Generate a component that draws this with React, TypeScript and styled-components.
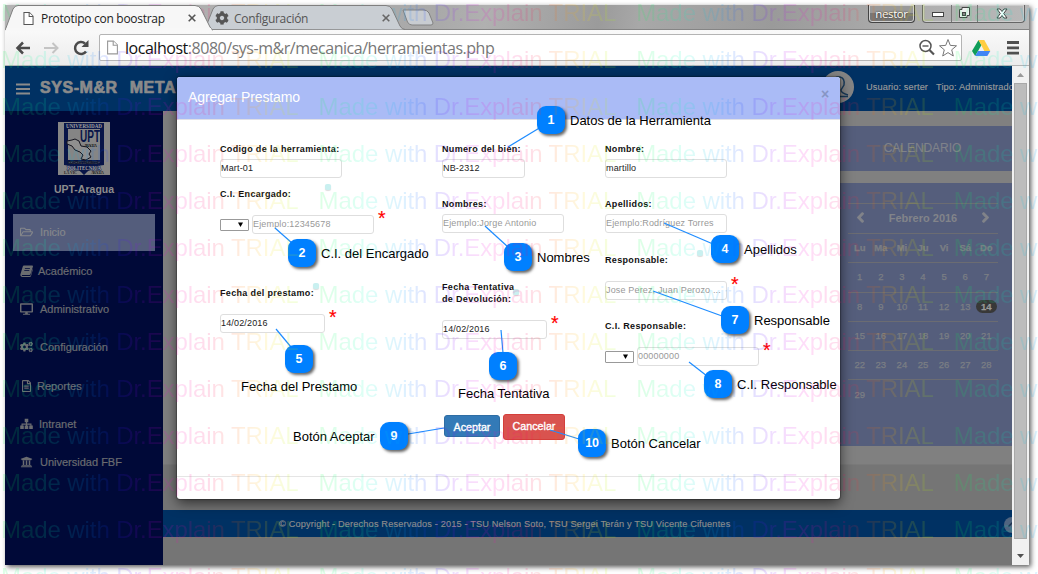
import React from 'react';
import styled, { createGlobalStyle } from 'styled-components';
import { FaRegFolderOpen, FaDesktop, FaCogs, FaRegFileAlt, FaUniversity, FaChevronLeft, FaChevronRight, FaCog } from 'react-icons/fa';

const Global = createGlobalStyle`
  * { box-sizing: border-box; }
  body { margin: 0; background: #fff; overflow: hidden; font-family: "Liberation Sans", Arial, sans-serif; }
`;

const Stage = styled.div`
  position: relative;
  width: 1038px;
  height: 574px;
  padding: 5px 9px 9px 5px;
  overflow: hidden;
`;

const BrowserWindow = styled.div`
  width: 1024px;
  height: 560px;
  display: flex;
  flex-direction: column;
  background: #fff;
  box-shadow: 2px 2px 5px rgba(0, 0, 0, 0.65);
`;

/* ---------- browser chrome ---------- */

const TabStrip = styled.div`
  height: 25px;
  display: flex;
  position: relative;
  background: linear-gradient(100deg, #b4b4b4 0%, #a9a9a9 42%, #b0b0b0 47%, #9b9b9b 58%, #a8a8a8 62%, #9a9a9a 75%, #adadad 88%, #b9b9b9 100%);
  border-bottom: 1px solid #858585;
`;

const Tab = styled.div<{ $w: number; $active?: boolean }>`
  position: relative;
  z-index: ${(p) => (p.$active ? 2 : 1)};
  width: ${(p) => p.$w}px;
  height: 26px;
  margin-right: -8px;
  display: flex;
  align-items: center;
  padding: 0 17px 0 18px;
  gap: 7px;
  font: 12px "Open Sans", sans-serif;
  color: ${(p) => (p.$active ? '#222' : '#555')};
`;

const TabShape = styled.svg`
  position: absolute;
  inset: 0;
  z-index: -1;
`;

const TabTitle = styled.span<{ $ls?: number; $pull?: number }>`
  flex: 1;
  margin-left: ${(p) => -(p.$pull ?? 0)}px;
  white-space: nowrap;
  letter-spacing: ${(p) => p.$ls ?? 0}px;
`;

const TabCog = styled(FaCog)`
  margin-left: -8px;
`;

const NewTab = styled.svg`
  margin: 4px 0 0 3px;
`;

const WindowButtons = styled.div`
  position: absolute;
  right: 4px;
  top: 0;
  display: flex;
  gap: 7px;
`;

const ProfileButton = styled.div`
  width: 47px;
  height: 18px;
  border: 1px solid #444;
  border-top: 0;
  border-radius: 0 0 4px 4px;
  box-shadow: inset 0 0 0 1px #d0d0d0;
  background: linear-gradient(#999 50%, #777 50%);
  color: #fff;
  font: 11.5px/17px "Open Sans", sans-serif;
  letter-spacing: -0.4px;
  text-align: center;
  text-shadow: 0 0 2px #222;
`;

const Controls = styled.div`
  width: 103px;
  height: 18px;
  display: flex;
  border: 1px solid #666;
  border-top: 0;
  border-radius: 0 0 4px 4px;
  box-shadow: inset 0 0 0 1px #ccc;
`;

const Toolbar = styled.div`
  height: 36px;
  flex: none;
  display: flex;
  align-items: center;
  padding: 0 9px 0 9px;
  background: linear-gradient(#f9f9f9, #ececec);
  border-bottom: 1px solid #b5b5b5;
`;

const NavIcons = styled.svg`
  flex: none;
  margin-right: 8px;
`;

const AddressBar = styled.div`
  width: 863px;
  height: 27px;
  display: flex;
  align-items: center;
  padding: 0 3px 0 7px;
  background: #fff;
  border: 1px solid #b4b4b4;
  border-radius: 2px;
`;

const Url = styled.div`
  flex: 1;
  margin-left: 7px;
  font: 16px/24px "Open Sans", sans-serif;
  letter-spacing: -0.47px;
  color: #777;
  white-space: nowrap;
  b { font-weight: 400; color: #111; }
`;

const ToolIcons = styled.svg`
  margin-left: 8px;
`;

/* ---------- page ---------- */

const Viewport = styled.div`
  flex: 1;
  min-height: 0;
  display: flex;
`;

const Page = styled.div`
  width: 1007px;
  display: flex;
  flex-direction: column;
  overflow: hidden;
`;

const Navbar = styled.header`
  height: 45px;
  flex: none;
  display: flex;
  align-items: center;
  padding-left: 11px;
  background: #003163;
  color: #8b8b8b;
`;

const Burger = styled.svg`
  flex: none;
`;

const Brand = styled.div`
  flex: none;
  display: flex;
  gap: 12px;
  margin: -2px 0 0 10px;
  width: 782px;
  font: bold 16px "Liberation Sans", Arial, sans-serif;
  letter-spacing: 0.55px;
  -webkit-text-stroke: 0.7px #8b8b8b;
`;

const Avatar = styled.svg`
  flex: none;
  margin-top: -3px;
`;

const UserInfo = styled.div`
  display: flex;
  flex: none;
  gap: 8px;
  margin: -4px 0 0 12px;
  font-size: 9.2px;
  letter-spacing: 0.12px;
  color: #9a9a9a;
  white-space: nowrap;
  -webkit-text-stroke: 0.15px #9a9a9a;
`;

const PageBody = styled.div`
  flex: 1;
  min-height: 0;
  display: flex;
`;

const Sidebar = styled.aside`
  width: 158px;
  flex: none;
  padding: 11px 8px 0;
  display: flex;
  flex-direction: column;
  align-items: center;
  background: #000938;
`;

const Crest = styled.svg`
  flex: none;
`;

const Campus = styled.div`
  margin: 7px 0 18px;
  font: bold 10.5px/14px "Liberation Sans", Arial, sans-serif;
  color: #8c8c8c;
`;

const Menu = styled.nav`
  width: 142px;
  display: flex;
  flex-direction: column;
`;

const MenuItem = styled.div<{ $active?: boolean; $gap?: number }>`
  height: ${(p) => (p.$active ? 37 : 38.2)}px;
  margin-bottom: ${(p) => (p.$active ? 1 : 0)}px;
  padding-left: 7px;
  padding-bottom: ${(p) => (p.$active ? 1 : 0)}px;
  display: flex;
  align-items: center;
  gap: ${(p) => p.$gap ?? 7}px;
  background: ${(p) => (p.$active ? '#545d7c' : 'transparent')};
  color: ${(p) => (p.$active ? '#85878b' : '#6a6c70')};
  font-size: 11px;
  -webkit-text-stroke: 0.2px currentColor;
  svg { width: 13px; height: 12px; stroke: none; }
`;

const Main = styled.main`
  flex: 1;
  min-width: 0;
  display: flex;
  flex-direction: column;
  background: #757575;
`;

const Content = styled.section`
  height: 354px;
  padding: 15px 0 0 670px;
  background: #808080;
  border-bottom: 1px solid #7a7a7a;
  overflow: hidden;
`;

const PanelTitle = styled.div`
  height: 45px;
  width: 180px;
  padding-right: 1px;
  font-size: 12px;
  line-height: 44px;
  letter-spacing: -0.05px;
  text-align: center;
  color: #7f828a;
  background: #555e7c;
  -webkit-text-stroke: 0.15px currentColor;
`;

const CalendarPanel = styled.div`
  height: 263px;
  width: 180px;
  margin-top: 12px;
  padding: 20px 15px 0;
  background: #555e7c;
`;

const CalendarHead = styled.div`
  height: 30px;
  display: flex;
  align-items: center;
  justify-content: space-between;
  padding: 0 7px 2px;
  border-top: 1px solid #6b6c72;
  font: bold 11px "Liberation Sans", Arial, sans-serif;
  color: #82848a;
  svg { stroke: currentColor; stroke-width: 50px; }
`;

const Week = styled.div<{ $bold?: boolean }>`
  height: 29.3px;
  padding-bottom: 1px;
  display: grid;
  grid-template-columns: repeat(7, 21.1px);
  justify-content: center;
  align-items: center;
  border-top: 1px solid #6b6c72;
  font-size: 9.5px;
  font-weight: ${(p) => (p.$bold ? 700 : 400)};
  color: #7b7e84;
  text-align: center;
  -webkit-text-stroke: 0.25px currentColor;
`;

const Today = styled.span`
  height: 13px;
  line-height: 13px;
  border-radius: 7px;
  background: #383838;
  color: #999;
  font-weight: 700;
`;

const Footer = styled.footer`
  margin-top: 45px;
  height: 27px;
  display: flex;
  align-items: center;
  padding-left: 116px;
  background: #003163;
  font-size: 9.2px;
  letter-spacing: 0.16px;
  color: #8c8c8c;
  white-space: nowrap;
  -webkit-text-stroke: 0.15px currentColor;
`;

const TopButton = styled.svg`
  margin: 2px -8px 0 auto;
`;

const Scrollbar = styled.div`
  width: 17px;
  display: flex;
  flex-direction: column;
  justify-content: space-between;
  align-items: center;
  background: #f1f1f1;
`;

const Thumb = styled.div`
  width: 13px;
  height: 456px;
  margin-bottom: 9px;
  background: #bcbcbc;
  border: 1px solid #a8a8a8;
`;

/* ---------- dialog ---------- */

const Dialog = styled.div`
  position: absolute;
  left: 177px;
  top: 77px;
  width: 663px;
  height: 422px;
  display: flex;
  flex-direction: column;
  background: #fff;
  border-radius: 3px;
  box-shadow: 0 4px 13px rgba(0, 0, 0, 0.6), 0 0 1px 1px rgba(0, 0, 0, 0.25);
`;

const DialogHead = styled.div`
  height: 43px;
  flex: none;
  display: flex;
  justify-content: space-between;
  padding: 12px 11px 0;
  background: #aabbf6;
  border-bottom: 1px solid #e0e0e6;
  border-radius: 3px 3px 0 0;
  color: #fff;
  font-size: 14px;
  line-height: 16px;
  letter-spacing: -0.1px;
`;

const Close = styled.span`
  margin-top: -4px;
  font: bold 14px/18px "Liberation Sans", Arial, sans-serif;
  color: #8795c4;
`;

const FormColumns = styled.div`
  height: 294px;
  display: flex;
  padding: 23px 0 0 43px;
`;

const Column = styled.div<{ $w: number }>`
  width: ${(p) => p.$w}px;
  display: flex;
  flex-direction: column;
`;

const Label = styled.label<{ $mt?: number; $mb?: number }>`
  margin-top: ${(p) => p.$mt ?? 0}px;
  margin-bottom: ${(p) => p.$mb ?? 4}px;
  font: bold 9px/12px "Liberation Sans", Arial, sans-serif;
  letter-spacing: 0.34px;
  color: #111;
  white-space: nowrap;
`;

const InputRow = styled.div`
  height: 19px;
  display: flex;
  align-items: center;
  gap: 3px;
`;

const Input = styled.div<{ $w: number; $empty?: boolean }>`
  width: ${(p) => p.$w}px;
  height: 19px;
  border: 1px solid #dedede;
  border-radius: 3px;
  font-size: 9px;
  line-height: 16px;
  letter-spacing: 0.16px;
  color: ${(p) => (p.$empty ? '#999' : '#222')};
  white-space: nowrap;
`;

const Select = styled.div`
  width: 29px;
  height: 12px;
  display: flex;
  align-items: center;
  justify-content: flex-end;
  padding-right: 5px;
  border: 1px solid #999;
  border-radius: 1px;
`;

const Required = styled.span`
  align-self: flex-start;
  margin: -8px 0 0 1px;
  font-size: 19.5px;
  line-height: 22px;
  color: #f00;
  -webkit-text-stroke: 0.15px #f00;
`;

const Actions = styled.div`
  height: 62px;
  display: flex;
  align-items: flex-start;
  gap: 3px;
  padding-left: 267px;
`;

const Button = styled.div<{ $danger?: boolean }>`
  width: ${(p) => (p.$danger ? 62 : 56)}px;
  height: ${(p) => (p.$danger ? 26 : 22)}px;
  margin-top: ${(p) => (p.$danger ? 0 : 1)}px;
  line-height: ${(p) => (p.$danger ? 23 : 22)}px;
  background: ${(p) => (p.$danger ? '#d9534f' : '#337ab7')};
  border: 1px solid ${(p) => (p.$danger ? '#d43f3a' : '#2e6da4')};
  border-radius: 3px;
  color: #fff;
  text-align: center;
  font-size: 10.7px;
  -webkit-text-stroke: 0.35px #fff;
`;

const DialogFoot = styled.div`
  border-top: 1px solid #e5e5e5;
`;

/* ---------- annotations ---------- */

const Lines = styled.svg`
  position: absolute;
  inset: 0;
`;

const Badge = styled.div<{ $x: number; $y: number }>`
  position: absolute;
  left: ${(p) => p.$x - 14}px;
  top: ${(p) => p.$y - 14}px;
  width: 28px;
  height: 28px;
  border-radius: 9px;
  background: #0080ff;
  box-shadow: 2px 2px 3px rgba(0, 0, 0, 0.6);
  color: #fff;
  font: bold 12.5px/28px "Liberation Sans", Arial, sans-serif;
  letter-spacing: -0.2px;
  text-align: center;
`;

const Caption = styled.div<{ $x: number; $y: number }>`
  position: absolute;
  left: ${(p) => p.$x}px;
  top: ${(p) => p.$y - 7}px;
  font-size: 13px;
  line-height: 16px;
  color: #000;
  white-space: nowrap;
`;

const Hint = styled.div<{ $x: number; $y: number }>`
  position: absolute;
  left: ${(p) => p.$x - 3}px;
  top: ${(p) => p.$y - 3}px;
  width: 6px;
  height: 6px;
  border-radius: 2px;
  background: #c9f0f0;
  box-shadow: 0 1px 1px #ddd;
`;

const Watermark = styled.div`
  position: absolute;
  left: 1px;
  top: 0;
  width: 1280px;
  opacity: 0.13;
  pointer-events: none;
`;

const WatermarkRow = styled.div`
  height: 47px;
  display: grid;
  grid-template-columns: repeat(4, 317.6px);
`;

const WatermarkText = styled.span`
  justify-self: start;
  height: 27px;
  font-size: 24px;
  line-height: 26px;
  letter-spacing: -0.08px;
  white-space: nowrap;
  color: transparent;
  background: linear-gradient(90deg, #00ff40 0%, #00ffc0 16%, #00a0ff 28%, #2020ff 38%, #a000ff 47%, #ff00d0 57%, #ff0060 70%, #ff7000 80%, #ffe000 90%, #a0ff00 100%);
  background-clip: text;
  -webkit-background-clip: text;
`;

const callouts = [
  { n: 1, x: 551, y: 120, text: 'Datos de la Herramienta', tx: 570, ty: 120, line: [508, 147, 541, 127] },
  { n: 2, x: 302, y: 253, text: 'C.I. del Encargado', tx: 321, ty: 253, line: [275, 228, 292, 243] },
  { n: 3, x: 518, y: 257, text: 'Nombres', tx: 537, ty: 257, line: [485, 226, 508, 247] },
  { n: 4, x: 725, y: 249, text: 'Apellidos', tx: 744, ty: 249, line: [664, 223, 713, 244] },
  { n: 5, x: 299, y: 359, text: 'Fecha del Prestamo', tx: 241, ty: 386, line: [276, 329, 291, 347] },
  { n: 6, x: 503, y: 366, text: 'Fecha Tentativa', tx: 458, ty: 393, line: [501, 330, 503, 353] },
  { n: 7, x: 735, y: 320, text: 'Responsable', tx: 754, ty: 320, line: [653, 291, 722, 316] },
  { n: 8, x: 718, y: 384, text: 'C.I. Responsable', tx: 737, ty: 384, line: [689, 362, 707, 376] },
  { n: 9, x: 394, y: 436, text: 'Botón Aceptar', tx: 293, ty: 436, line: [408, 434, 444, 428] },
  { n: 10, x: 592, y: 443, text: 'Botón Cancelar', tx: 611, ty: 443, line: [550, 430, 579, 439] },
];

const weeks = [
  [1, 2, 3, 4, 5, 6, 7],
  [8, 9, 10, 11, 12, 13, 14],
  [15, 16, 17, 18, 19, 20, 21],
  [22, 23, 24, 25, 26, 27, 28],
  [29],
];

const DocIcon = ({ w, h, c }: { w: number; h: number; c: string }) => (
  <svg width={w} height={h} viewBox="0 0 11 14" fill="#fff" stroke={c} strokeWidth="1.1">
    <path d="M.6.6h5.8l4 4v8.8H.6z" />
    <path d="M6.2.6v4.2h4.2" />
  </svg>
);

const CloseX = ({ c }: { c: string }) => (
  <svg width="8" height="8" viewBox="0 0 8 8" stroke={c} strokeWidth="1.6"><path d="M.7.7l6.6 6.6M7.3.7L.7 7.3" /></svg>
);

const BookIcon = () => (
  <svg viewBox="0 0 13 12" fill="currentColor">
    <path d="M4 .5h8.300q.9.200.6 1.200L10.600 9q-.3.900-1.200.900H2.500q-.8.100-.7.600.1.500.8.500h7.200q.7 0 .9-.7L12.500 4l.400.600-1.900 6.300q-.3 1-1.300 1H2.300Q.8 11.900.400 10.500q-.2-.7.100-1.400L2.700 1.700Q3 .6 4 .5zM5 3l-.2.800h5l.2-.8zM4.400 5l-.2.800h5l.2-.8z" fillRule="evenodd" />
  </svg>
);

const SitemapIcon = () => (
  <svg viewBox="0 0 13 12" fill="currentColor">
    <path d="M4.700.8h3.600v3.400H7.100v1.400h4.400v2h1.300V11H9.200V7.600h1.200v-.9H7.100v.9h1.200V11H4.700V7.600h1.200v-.9H2.600v.9h1.200V11H.200V7.600h1.300v-2h4.400V4.200H4.700z" />
  </svg>
);

const Logo = () => (
  <Crest width="52" height="53" viewBox="0 0 52 53" fontFamily="Liberation Serif" fontWeight="bold">
    <rect width="52" height="53" fill="#858585" />
    <path d="M6 1h40v42q-12 1-17 7l-3 3-3-3q-5-6-17-7z" fill="#081548" />
    <path d="M10 7h32v31H10z" fill="#858585" />
    <text x="8" y="5.800" fontSize="5.500" textLength="36" lengthAdjust="spacingAndGlyphs" fill="#a0a0a0">UNIVERSIDAD</text>
    <text x="22" y="19.500" fontSize="16" textLength="20" lengthAdjust="spacingAndGlyphs" fill="#081548" fontFamily="Liberation Sans">UPT</text>
    <text x="26" y="24.500" fontSize="4" textLength="13" fill="#111">ARAGUA</text>
    <path d="M9 19l5-1 3-1 4 2 2 5 6 1 4 4-2 3 2 3-5 3-5-1 2-4-3-3-5-2-3-4-5-2z" fill="#8f8f8f" stroke="#15151f" />
    <text x="10" y="42" fontSize="4" textLength="32" fill="#111" stroke="#858585" strokeWidth=".1">FEDERICO BRITO F</text>
    <text x="9" y="47.500" fontSize="6" textLength="34" lengthAdjust="spacingAndGlyphs" fill="#a8a8a8" stroke="#081548" strokeWidth="1" paintOrder="stroke">POLITECNICA</text>
    <text x="6" y="52" fontSize="4" textLength="13" fill="#222">LA VIC</text>
    <text x="33" y="52" fontSize="4" textLength="13" fill="#222">ARAGUA</text>
  </Crest>
);

const Arrow = () => (
  <svg width="5" height="5" viewBox="0 0 5 5"><path d="M0 .5h5L2.500 5z" fill="#000" /></svg>
);

export default function App() {
  return (
    <Stage>
      <Global />
      <BrowserWindow>
        <TabStrip>
          <Tab $w={208} $active>
            <TabShape width="208" height="26"><path d="M0 25.500L8 4Q10 .5 13 .5H190Q194 .5 196 4L205 22Q207 25.500 209 25.500" fill="#f7f7f7" stroke="#7f7f7f" /><path d="M0 26L2 23H206V26z" fill="#f8f8f8" /></TabShape>
            <DocIcon w={11} h={13} c="#555" />
            <TabTitle $ls={-0.28}>Prototipo con boostrap</TabTitle>
            <CloseX c="#555" />
          </Tab>
          <Tab $w={202}>
            <TabShape width="202" height="25"><path d="M0 24L8 4Q10 .5 13 .5H181Q185 .5 187 4L195 21Q197 24.500 200 24.500" fill="#c9ced3" stroke="#808080" /></TabShape>
            <TabCog size={14} color="#555" />
            <TabTitle $ls={-0.3} $pull={2}>Configuración</TabTitle>
            <CloseX c="#666" />
          </Tab>
          <NewTab width="32" height="17"><path d="M1 1H22Q25 1 27 4L31 14Q31 16 29 16H10Q7 16 5.500 13z" fill="#c8ccd1" stroke="#828282" /></NewTab>
          <WindowButtons>
            <ProfileButton>nestor</ProfileButton>
            <Controls>
              <svg width="101" height="17">
                <path d="M28.500 0v17M54.500 0v17" stroke="#777" />
                <rect x="9.500" y="7.500" width="11" height="4" fill="#fff" stroke="#444" />
                <path d="M36.500 4.500h2.500v-2h7.500v8h-2.500v2h-7.500z" fill="#eee" stroke="#444" />
                <rect x="39.500" y="7.500" width="3" height="3" fill="#888" stroke="#444" />
                <path d="M74 4h3l2 2.500L81 4h3l-3.300 4.500L84 13h-3l-2-2.500L77 13h-3l3.300-4.500z" fill="#fff" stroke="#444" />
              </svg>
            </Controls>
          </WindowButtons>
        </TabStrip>
        <Toolbar>
          <NavIcons width="77" height="20" fill="none" strokeWidth="2.500">
            <path d="M16 10H4M9 4.500L3.500 10 9 15.500" stroke="#4b4b4b" />
            <path d="M30 10H43M38.500 5L43.500 10l-5 5" stroke="#c4c4c4" strokeWidth="2" />
            <path d="M72 13.500A6 6 0 1 1 71 5.500" stroke="#4b4b4b" />
            <path d="M74.500 2v7h-7z" fill="#4b4b4b" />
          </NavIcons>
          <AddressBar>
            <DocIcon w={11} h={15} c="#999" />
            <Url><b>localhost</b>:8080/sys-m&amp;r/mecanica/herramientas.php</Url>
            <svg width="40" height="20" fill="none" stroke="#555">
              <circle cx="7.500" cy="8" r="5.500" strokeWidth="1.500" />
              <path d="M11.500 12l4.500 4.500" strokeWidth="2.200" />
              <path d="M4.500 8h6" strokeWidth="1.400" />
              <path d="M30 1.500l2.300 5.900 6.200.4-4.800 4 1.600 6.200L30 14.600 24.700 18l1.600-6.200-4.800-4 6.200-.4z" stroke="#777" />
            </svg>
          </AddressBar>
          <ToolIcons width="50" height="20">
            <path d="M8.500 2L2 13l3.200 5 6.300-11z" fill="#0f9d58" />
            <path d="M8.500 2h5.800l6 11h-6z" fill="#ffcd40" />
            <path d="M8 13h12.300l-3 5H5.200z" fill="#4285f4" />
            <path d="M37 4.500h12M37 9.800h12M37 15.100h12" stroke="#505050" strokeWidth="2.800" />
          </ToolIcons>
        </Toolbar>
        <Viewport>
          <Page>
            <Navbar>
              <Burger width="14" height="12"><path d="M0 1.500h14M0 6h14M0 10.500h14" stroke="#8b8b8b" strokeWidth="2.200" /></Burger>
              <Brand><span>SYS-M&amp;R</span><span>META</span></Brand>
              <Avatar width="32" height="32" viewBox="0 0 32 32">
                <circle cx="16" cy="16" r="16" fill="#858585" />
                <path d="M5 25q2-4 8-4v-3q-3-4-2-8 2-5 7-4 5 1 4 8l-3 5q0 3 7 5" fill="none" stroke="#183a5b" strokeWidth="1.400" />
                <path d="M6 25.500h20" stroke="#183a5b" strokeWidth="1.500" />
              </Avatar>
              <UserInfo><span>Usuario: serter</span><span>Tipo: Administrador</span></UserInfo>
            </Navbar>
            <PageBody>
              <Sidebar>
                <Logo />
                <Campus>UPT-Aragua</Campus>
                <Menu>
                  <MenuItem $active><FaRegFolderOpen />Inicio</MenuItem>
                  <MenuItem $gap={5}><BookIcon />Académico</MenuItem>
                  <MenuItem><FaDesktop />Administrativo</MenuItem>
                  <MenuItem><FaCogs />Configuración</MenuItem>
                  <MenuItem $gap={4}><FaRegFileAlt />Reportes</MenuItem>
                  <MenuItem $gap={6}><SitemapIcon />Intranet</MenuItem>
                  <MenuItem><FaUniversity />Universidad FBF</MenuItem>
                </Menu>
              </Sidebar>
              <Main>
                <Content>
                  <PanelTitle>CALENDARIO</PanelTitle>
                  <CalendarPanel>
                    <CalendarHead><FaChevronLeft size={11} />Febrero 2016<FaChevronRight size={11} /></CalendarHead>
                    <Week $bold>{['Lu', 'Ma', 'Mi', 'Ju', 'Vi', 'Sá', 'Do'].map((d) => <span key={d}>{d}</span>)}</Week>
                    {weeks.map((w) => (
                      <Week key={w[0]}>{w.map((d) => (d === 14 ? <Today key={d}>{d}</Today> : <span key={d}>{d}</span>))}</Week>
                    ))}
                  </CalendarPanel>
                </Content>
                <Footer>
                  © Copyright - Derechos Reservados - 2015 - TSU Nelson Soto, TSU Sergei Terán y TSU Vicente Cifuentes
                  <TopButton width="16" height="16">
                    <circle cx="8" cy="8" r="8" fill="#4f6580" />
                    <path d="M4.500 9.500L8 6l3.500 3.500" fill="none" stroke="#1c3350" strokeWidth="1.500" />
                  </TopButton>
                </Footer>
              </Main>
            </PageBody>
          </Page>
          <Scrollbar>
            <svg width="17" height="16"><path d="M5 11h7L8.500 7z" fill="#999" /></svg>
            <Thumb />
            <svg width="17" height="17"><path d="M5 6h7l-3.500 4z" fill="#505050" /></svg>
          </Scrollbar>
        </Viewport>
      </BrowserWindow>

      <Dialog>
        <DialogHead>Agregar Prestamo<Close>×</Close></DialogHead>
        <FormColumns>
          <Column $w={222}>
            <Label>Codigo de la herramienta:</Label>
            <InputRow><Input $w={122}>Mart-01</Input></InputRow>
            <Label $mt={10} $mb={15}>C.I. Encargado:</Label>
            <InputRow><Select><Arrow /></Select><Input $w={122} $empty>Ejemplo:12345678</Input><Required>*</Required></InputRow>
            <Label $mt={53} $mb={15}>Fecha del prestamo:</Label>
            <InputRow><Input $w={105}>14/02/2016</Input><Required>*</Required></InputRow>
          </Column>
          <Column $w={163}>
            <Label>Numero del bien:</Label>
            <InputRow><Input $w={83}>NB-2312</Input></InputRow>
            <Label $mt={20}>Nombres:</Label>
            <InputRow><Input $w={122} $empty>Ejemplo:Jorge Antonio</Input></InputRow>
            <Label $mt={48} $mb={15}>Fecha Tentativa<br />de Devolución:</Label>
            <InputRow><Input $w={105}>14/02/2016</Input><Required>*</Required></InputRow>
          </Column>
          <Column $w={200}>
            <Label>Nombre:</Label>
            <InputRow><Input $w={122}>martillo</Input></InputRow>
            <Label $mt={20}>Apellidos:</Label>
            <InputRow><Input $w={122} $empty>Ejemplo:Rodríguez Torres</Input></InputRow>
            <Label $mt={21} $mb={15}>Responsable:</Label>
            <InputRow><Input $w={122} $empty>Jose Perez, Juan Perozo ...</Input><Required>*</Required></InputRow>
            <Label $mt={20} $mb={15}>C.I. Responsable:</Label>
            <InputRow><Select><Arrow /></Select><Input $w={122} $empty>00000000</Input><Required>*</Required></InputRow>
          </Column>
        </FormColumns>
        <Actions>
          <Button>Aceptar</Button>
          <Button $danger>Cancelar</Button>
        </Actions>
        <DialogFoot />
      </Dialog>

      <Hint $x={328} $y={187} />
      <Hint $x={316} $y={286} />
      <Hint $x={516} $y={292} />
      <Hint $x={700} $y={253} />

      <Lines width="1038" height="574" stroke="#1e8cff" strokeWidth="1.200">
        {callouts.map((c) => <line key={c.n} x1={c.line[0]} y1={c.line[1]} x2={c.line[2]} y2={c.line[3]} />)}
      </Lines>
      {callouts.map((c) => (
        <React.Fragment key={c.n}>
          <Badge $x={c.x} $y={c.y}>{c.n}</Badge>
          <Caption $x={c.tx} $y={c.ty}>{c.text}</Caption>
        </React.Fragment>
      ))}

      <Watermark>
        {Array.from({ length: 13 }, (_, r) => (
          <WatermarkRow key={r}>
            {[0, 1, 2, 3].map((i) => <WatermarkText key={i}>Made with Dr.Explain TRIAL</WatermarkText>)}
          </WatermarkRow>
        ))}
      </Watermark>
    </Stage>
  );
}
